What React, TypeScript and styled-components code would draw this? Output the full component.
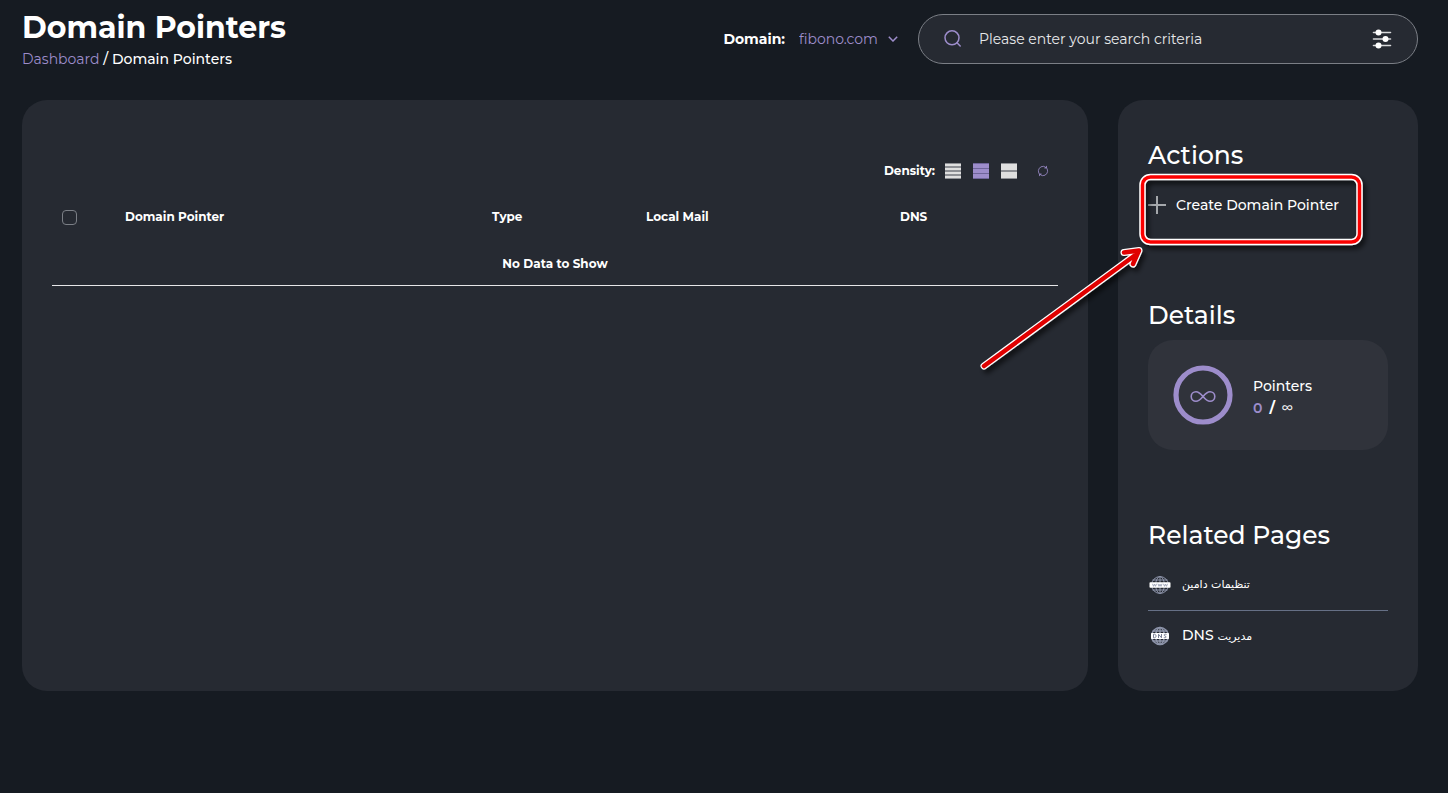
import React from "react";
import styled, { createGlobalStyle } from "styled-components";

const color = {
  page: "#161b22",
  panel: "#262a32",
  card: "#30333b",
  accent: "#9d8dcb",
  line: "#7b7f86",
  text: "#ffffff",
};

const GlobalStyle = createGlobalStyle`
  *, *::before, *::after { box-sizing: border-box; }
  body {
    margin: 0;
    background: ${color.page};
    color: ${color.text};
    font-family: Montserrat, Inter, "Noto Sans", sans-serif;
    font-size: 14px;
    line-height: 20px;
  }
  button, input, select { font: inherit; color: inherit; }
`;

const Page = styled.div`
  min-height: 100vh;
  padding: 8px 30px 30px 22px;
`;

const Header = styled.header`
  display: flex;
  align-items: flex-start;
  justify-content: space-between;
  gap: 20px;
  min-height: 92px;
`;

const Title = styled.h1`
  margin: 0;
  font-size: 30px;
  line-height: 40px;
  font-weight: 700;
`;

const Breadcrumb = styled.nav`
  margin-top: 1px;
  font-weight: 500;
`;

const CrumbLink = styled.a`
  color: ${color.accent};
  font-weight: 400;
  text-decoration: none;
`;

const Tools = styled.div`
  display: flex;
  align-items: center;
  gap: 20px;
  padding-top: 6px;
`;

const DomainPicker = styled.div`
  display: flex;
  align-items: center;
  gap: 14px;
`;

const DomainLabel = styled.label`
  font-weight: 700;
`;

const SelectBox = styled.div`
  display: grid;
  grid-template-columns: 1fr 10px;
  align-items: center;
`;

const DomainSelect = styled.select`
  grid-area: 1 / 1 / 2 / 3;
  appearance: none;
  border: 0;
  padding: 0 20px 0 0;
  background: transparent;
  color: ${color.accent};
`;

const Chevron = styled.svg`
  grid-area: 1 / 2;
  pointer-events: none;
`;

const SearchBar = styled.form`
  display: flex;
  align-items: center;
  width: 500px;
  height: 50px;
  padding: 0 25px 0 24px;
  border: 1px solid ${color.line};
  border-radius: 25px;
  background: ${color.panel};
`;

const SearchInput = styled.input`
  flex: 1;
  min-width: 0;
  margin: 0 16px;
  padding: 0;
  border: 0;
  outline: 0;
  background: transparent;
  &::placeholder { color: #e8e9eb; opacity: 1; }
`;

const IconButton = styled.button`
  display: flex;
  align-items: center;
  justify-content: center;
  padding: 0;
  border: 0;
  background: none;
  color: ${color.accent};
  cursor: pointer;
`;

const Columns = styled.div`
  display: grid;
  grid-template-columns: minmax(0, 1fr) 300px;
  gap: 30px;
`;

const Panel = styled.main`
  padding: 52px 30px 30px;
  border-radius: 25px;
  background: ${color.panel};
`;

const Toolbar = styled.div`
  display: flex;
  align-items: center;
  justify-content: flex-end;
  gap: 12px;
  height: 38px;
  padding-right: 9px;
  font-size: 12px;
  font-weight: 700;
`;

const DensityLabel = styled.span`
  margin-right: -2px;
`;

const RefreshButton = styled(IconButton)`
  margin-left: 8px;
`;

const Table = styled.table`
  width: 100%;
  table-layout: fixed;
  border-collapse: collapse;
  font-size: 12px;
`;

const HeadCell = styled.th<{ $width?: string }>`
  width: ${(p) => p.$width ?? "auto"};
  height: 54px;
  padding: 0 10px;
  text-align: left;
  font-weight: 700;
`;

const EmptyCell = styled.td`
  height: 41px;
  padding: 0;
  border-bottom: 1px solid #e6e6e8;
  text-align: center;
  font-weight: 700;
`;

const Checkbox = styled.input`
  display: block;
  appearance: none;
  width: 15px;
  height: 15px;
  margin: 0;
  border: 1px solid ${color.line};
  border-radius: 4px;
`;

const Sidebar = styled.aside`
  display: flex;
  flex-direction: column;
  gap: 70px;
  padding: 40px 30px 30px;
  border-radius: 25px;
  background: ${color.panel};
`;

const SectionTitle = styled.h2`
  margin: 0 0 10px;
  font-size: 25px;
  line-height: 30px;
  font-weight: 500;
`;

const ActionRow = styled.div`
  position: relative;
  display: flex;
  align-items: center;
  height: 50px;
`;

const ActionButton = styled.button`
  display: flex;
  align-items: center;
  gap: 10px;
  padding: 0;
  border: 0;
  background: none;
  font-weight: 500;
  cursor: pointer;
`;

const Callout = styled.svg`
  position: absolute;
  top: -12px;
  left: -174px;
  pointer-events: none;
  overflow: visible;
`;

const UsageCard = styled.div`
  display: flex;
  align-items: center;
  gap: 20px;
  height: 110px;
  padding: 0 25px;
  border-radius: 25px;
  background: ${color.card};
`;

const UsageText = styled.div`
  padding-top: 3px;
  font-weight: 500;
  line-height: 22px;
`;

const UsageValue = styled.div`
  display: flex;
  gap: 7px;
  font-weight: 700;
`;

const Used = styled.span`
  color: ${color.accent};
  font-weight: 600;
`;

const Limit = styled.span`
  font-size: 12px;
  font-weight: 500;
`;

const RelatedList = styled.ul`
  margin: 0;
  padding: 0;
  list-style: none;
`;

const RelatedItem = styled.li`
  & + & { border-top: 1px solid #667086; }
`;

const RelatedLink = styled.a`
  display: flex;
  align-items: center;
  gap: 10px;
  height: 50px;
  color: inherit;
  font-weight: 500;
  text-decoration: none;
`;

const Persian = styled.span`
  font-family: "DejaVu Sans", sans-serif;
  font-size: 11px;
`;

function SearchIcon() {
  return (
    <svg width="20" height="20" viewBox="0 0 20 20" fill="none" stroke={color.accent} strokeWidth="1.5" aria-hidden="true">
      <circle cx="9" cy="8.8" r="7" />
      <path d="M14 13.8 L17.2 17" strokeLinecap="round" />
    </svg>
  );
}

function FilterIcon() {
  return (
    <svg width="20" height="20" viewBox="0 0 20 20" aria-hidden="true">
      <g stroke="#d8d9db" strokeWidth="1.6" strokeLinecap="round">
        <path d="M1.5 3.5H18.5M1.5 10H18.5M1.5 16.5H18.5" />
      </g>
      <g fill="#fff">
        <circle cx="6.5" cy="3.5" r="3" />
        <circle cx="13.5" cy="10" r="3" />
        <circle cx="6.5" cy="16.5" r="3" />
      </g>
    </svg>
  );
}

function DensityIcon({ bands, active }: { bands: [number, number][]; active?: boolean }) {
  return (
    <svg width="16" height="16" viewBox="0 0 16 16" shapeRendering="crispEdges" aria-hidden="true">
      <rect width="16" height="16" fill={active ? "#6f659a" : "#8d8f94"} />
      {bands.map(([y, h]) => (
        <rect key={y} y={y} width="16" height={h} fill={active ? color.accent : "#dfdfdf"} />
      ))}
    </svg>
  );
}

function RefreshIcon() {
  return (
    <svg width="12" height="12" viewBox="0 0 12 12" fill="none" stroke={color.accent} strokeWidth="0.8" aria-hidden="true">
      <path d="M3.6 10A4.6 4.6 0 0 1 4.2 1.8M8.4 2A4.600 4.6 0 0 1 7.8 10.200" />
      <path d="M4 1.8A4.6 4.6 0 0 1 9.2 2.700M8 10.200A4.6 4.6 0 0 1 2.800 9.300" />
      <path d="M9.500 0.900V3H7.400M2.500 11.100V9H4.600" />
    </svg>
  );
}

function PlusIcon() {
  return (
    <svg width="18" height="18" viewBox="0 0 18 18" stroke="#a5a8ac" strokeWidth="2" shapeRendering="crispEdges" aria-hidden="true">
      <path d="M9 0V18M0 9H18" />
    </svg>
  );
}

function InfinityRing() {
  return (
    <svg width="60" height="60" viewBox="0 0 60 60" fill="none" stroke={color.accent} aria-hidden="true">
      <circle cx="30" cy="30" r="27" strokeWidth="5.2" />
      <path
        d="M30 31.5C27.5 28.5 25.5 26.7 23 26.7A4.8 4.8 0 0 0 23 36.3C25.5 36.3 27.5 34.5 30 31.5C32.5 28.5 34.5 26.7 37 26.7A4.8 4.8 0 0 1 37 36.3C34.5 36.3 32.5 34.5 30 31.5Z"
        strokeWidth="1.6"
      />
    </svg>
  );
}

function GlobeIcon({ kind }: { kind: "www" | "dns" }) {
  const dns = kind === "dns";
  return (
    <svg width="24" height="20" viewBox="0 0 24 20" fill="none" aria-hidden="true">
      <g stroke="#8e95ab" strokeWidth={dns ? 1.5 : 1}>
        <circle cx="12" cy="10" r="8.4" />
        <ellipse cx="12" cy="10" rx="4.3" ry="8.4" />
        <path d="M12 1.5V18.5M4.5 5H19.5M4.5 15H19.5" />
      </g>
      <rect x={dns ? 3 : 1.5} y={dns ? 7 : 7.2} width={dns ? 18 : 21} height={dns ? 6 : 5.6} rx="0.8" fill="#fff" />
      <g stroke={dns ? "#7b8197" : "#8e95ab"} strokeWidth={dns ? 1 : 0.8}>
        {dns ? (
          <path d="M5.5 8.2V11.8H6.5C8.5 11.8 8.5 8.2 6.5 8.2ZM10.5 12V8.2L13.5 11.8V8M18.5 8.4C16 7.6 15.5 9.4 17 10C19 10.6 18.3 12.2 15.8 11.6" />
        ) : (
          <path d="M4.5 8.8 5.5 11.3 6.5 9.2 7.5 11.3 8.5 8.8M10 8.8 11 11.3 12 9.2 13 11.3 14 8.8M15.5 8.8 16.5 11.3 17.5 9.2 18.5 11.3 19.5 8.8" />
        )}
      </g>
    </svg>
  );
}

/* Red frame around the action, with an arrow that leads up to it. */
function ActionCallout() {
  const arrow = "M10 198L160 88M150 84.5L165 82.5L159 96";
  return (
    <Callout width="400" height="210" viewBox="0 0 400 210" fill="none" strokeLinejoin="round" strokeLinecap="round" aria-hidden="true">
      <defs>
        <filter id="callout-shadow" x="-10%" y="-10%" width="120%" height="130%">
          <feDropShadow dx="3" dy="4" stdDeviation="2.5" floodColor="#000" floodOpacity="0.6" />
        </filter>
      </defs>
      <g filter="url(#callout-shadow)">
        <rect x="168.500" y="9" width="217" height="65" rx="8" stroke="#fff" strokeWidth="6.5" />
        <rect x="168.500" y="9" width="217" height="65" rx="8" stroke="#fa0000" strokeWidth="3.5" />
      </g>
      <g filter="url(#callout-shadow)">
        <path d={arrow} stroke="#fff" strokeWidth="7" />
        <path d={arrow} stroke="#e00000" strokeWidth="4.5" />
      </g>
    </Callout>
  );
}

export default function App() {
  return (
    <>
      <GlobalStyle />
      <Page>
        <Header>
          <div>
            <Title>Domain Pointers</Title>
            <Breadcrumb aria-label="Breadcrumb">
              <CrumbLink href="#dashboard">Dashboard</CrumbLink> / Domain Pointers
            </Breadcrumb>
          </div>
          <Tools>
            <DomainPicker>
              <DomainLabel htmlFor="domain">Domain:</DomainLabel>
              <SelectBox>
                <DomainSelect id="domain" defaultValue="fibono.com">
                  <option>fibono.com</option>
                </DomainSelect>
                <Chevron width="10" height="6" viewBox="0 0 10 6" fill="none" stroke={color.accent} strokeWidth="1.5" aria-hidden="true">
                  <path d="M0.8 0.8 5 5 9.2 0.8" />
                </Chevron>
              </SelectBox>
            </DomainPicker>
            <SearchBar role="search">
              <SearchIcon />
              <SearchInput type="text" aria-label="Search" placeholder="Please enter your search criteria" />
              <IconButton type="button" aria-label="Filters">
                <FilterIcon />
              </IconButton>
            </SearchBar>
          </Tools>
        </Header>

        <Columns>
          <Panel>
            <Toolbar>
              <DensityLabel>Density:</DensityLabel>
              <IconButton type="button" aria-label="Compact">
                <DensityIcon bands={[[1, 2], [5, 2], [9, 2], [13, 2]]} />
              </IconButton>
              <IconButton type="button" aria-label="Default">
                <DensityIcon active bands={[[1, 4], [6, 4], [11, 4]]} />
              </IconButton>
              <IconButton type="button" aria-label="Comfortable">
                <DensityIcon bands={[[1, 6], [9, 6]]} />
              </IconButton>
              <RefreshButton type="button" aria-label="Refresh">
                <RefreshIcon />
              </RefreshButton>
            </Toolbar>
            <Table>
              <thead>
                <tr>
                  <HeadCell $width="63px">
                    <Checkbox type="checkbox" aria-label="Select all" />
                  </HeadCell>
                  <HeadCell>Domain Pointer</HeadCell>
                  <HeadCell $width="154px">Type</HeadCell>
                  <HeadCell $width="254px">Local Mail</HeadCell>
                  <HeadCell $width="168px">DNS</HeadCell>
                </tr>
              </thead>
              <tbody>
                <tr>
                  <EmptyCell colSpan={5}>No Data to Show</EmptyCell>
                </tr>
              </tbody>
            </Table>
          </Panel>

          <Sidebar>
            <section>
              <SectionTitle>Actions</SectionTitle>
              <ActionRow>
                <ActionButton type="button">
                  <PlusIcon />
                  Create Domain Pointer
                </ActionButton>
                <ActionCallout />
              </ActionRow>
            </section>
            <section>
              <SectionTitle>Details</SectionTitle>
              <UsageCard>
                <InfinityRing />
                <UsageText>
                  <div>Pointers</div>
                  <UsageValue>
                    <Used>0</Used>
                    <span>/</span>
                    <Limit>∞</Limit>
                  </UsageValue>
                </UsageText>
              </UsageCard>
            </section>
            <section>
              <SectionTitle>Related Pages</SectionTitle>
              <RelatedList>
                <RelatedItem>
                  <RelatedLink href="#domain-settings">
                    <GlobeIcon kind="www" />
                    <Persian lang="fa" dir="rtl">تنظیمات دامین</Persian>
                  </RelatedLink>
                </RelatedItem>
                <RelatedItem>
                  <RelatedLink href="#dns">
                    <GlobeIcon kind="dns" />
                    <span>
                      DNS <Persian lang="fa">مدیریت</Persian>
                    </span>
                  </RelatedLink>
                </RelatedItem>
              </RelatedList>
            </section>
          </Sidebar>
        </Columns>
      </Page>
    </>
  );
}
